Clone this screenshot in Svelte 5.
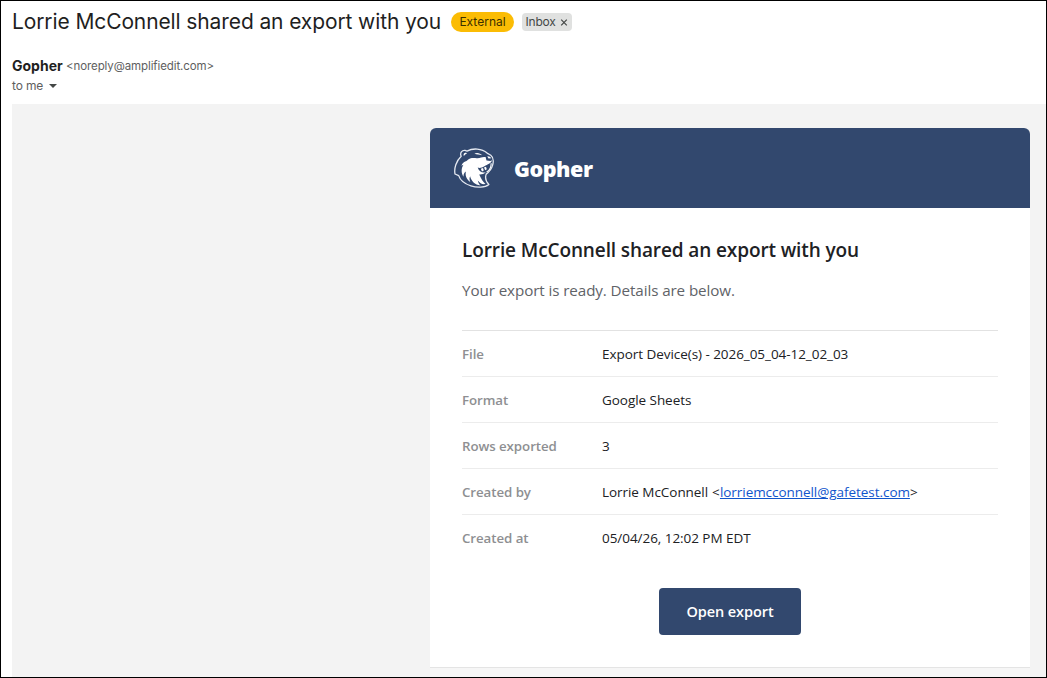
<script>
  const details = [
    { label: 'File', value: 'Export Device(s) - 2026_05_04-12_02_03' },
    { label: 'Format', value: 'Google Sheets' },
    { label: 'Rows exported', value: '3' },
    { label: 'Created by', value: 'Lorrie McConnell', email: 'lorriemcconnell@gafetest.com' },
    { label: 'Created at', value: '05/04/26, 12:02 PM EDT' }
  ];
</script>

<main class="window">
  <header class="mail-head">
    <div class="subject-row">
      <h1>Lorrie McConnell shared an export with you</h1>
      <span class="external">External</span>
      <span class="inbox"><span>Inbox</span>
        <svg width="8" height="8" viewBox="0 0 8 8"><path d="M1.2 1.7l5.6 5.6M6.8 1.7L1.2 7.3" stroke="#444746" stroke-width="1.2" /></svg>
      </span>
    </div>
    <div class="sender"><strong>Gopher</strong><span>&lt;noreply@amplifiedit.com&gt;</span></div>
    <div class="recipient"><span>to me</span>
      <svg width="8" height="4" viewBox="0 0 8 4"><path d="M0 0h8L4 4z" fill="#444746" /></svg>
    </div>
  </header>

  <section class="mail-body">
    <article class="card">
      <div class="brand">
        <svg class="logo" viewBox="0 0 40 40" width="40" height="40" fill="none">
          <path d="M7.2 8.2C5.6 5.1 8 2 11.1 2.4L13 3.1C18.8-.1 27.8.2 33.1 5.1L36.8 7.3C39.7 9.6 39.8 13.1 38.6 17.2C37.8 20.4 35.4 23.8 32.2 26.1C31 29.6 31.7 33.4 34.9 36.4C30.9 39.8 22.7 39.8 16.9 37.8C11.2 36 6.4 33 4.7 27.6L1 26C-.1 20.5 2.2 12.8 7.2 8.2Z" stroke="#e4e8f0" stroke-width="1.3" stroke-linejoin="round" />
          <path d="M9.6 6.2C10.4 4.5 12.5 4.5 13.3 5.3C11.7 6 10.8 6.9 9.8 8.3Z" fill="#fff" />
          <path d="M20.4 5.8C23 4.2 26.4 5.5 28 7.3C25.4 6.5 23.1 6.4 20.4 5.8Z" fill="#fff" />
          <path d="M12.5 13C16.3 9 20.2 10.4 23.4 10.2C27.2 10 28.2 8.4 31.6 9.1L32.5 12.4L36.4 13L38.2 12.3C37 15.5 33.6 16.4 30.4 18.3C27.5 20.1 25.2 20.2 23.7 19.5C25.1 23.5 28 25.1 31.9 24.2C29.7 25.9 27.7 26.6 25.2 26.4C27.2 30.8 29.1 33.8 31.5 36.1C28.1 36.8 26.1 35.1 23.8 32.5C24.2 34.7 25.1 36.1 26.5 37.4C20.8 36.9 17.2 32.8 16.1 28.2C15.2 30.1 15.4 31.8 16.3 34C12.4 31.2 11 27.6 11.9 23.5C10 24.6 9.5 26.4 9.5 28.7C7 24.7 7.2 20.3 9.4 16.7L7.4 17.7C8.3 15.4 9.8 13.7 12.5 13Z" fill="#fff" />
          <path d="M37.2 15.2C37.2 18.4 35.5 22.4 32.6 24" stroke="#fff" stroke-width="1.1" />
          <path d="M30 19.6l2-.9.8 2.6-1.6 1zM26.8 20.8l2.2-.7.8 2.5-1.8.8z" fill="#fff" />
          <path d="M33.3 8.3C34.6 7.9 36.4 8.7 37.3 10.3L34.5 10.6Z" fill="#fff" />
        </svg>
        <span>Gopher</span>
      </div>
      <div class="content">
        <h2>Lorrie McConnell shared an export with you</h2>
        <p>Your export is ready. Details are below.</p>
        <dl>
          {#each details as item}
            <div class="row">
              <dt>{item.label}</dt>
              <dd>{item.value}{#if item.email}<span class="angle">{' <'}</span><a href={'mailto:' + item.email}>{item.email}</a>&gt;{/if}</dd>
            </div>
          {/each}
        </dl>
        <button>Open export</button>
      </div>
      <footer></footer>
    </article>
  </section>
</main>

<style>
  .window {
    box-sizing: border-box;
    width: 1047px;
    height: 678px;
    border: 1px solid #000;
    background: #fff;
    overflow: hidden;
    color: #202124;
    font-family: Inter, sans-serif;
    display: flex;
    flex-direction: column;
  }
  .mail-head { height: 103px; flex: none; padding-left: 11px; }
  .subject-row { display: flex; align-items: center; height: 42px; }
  h1 { margin: 0; padding-bottom: 2px; width: 429px; font-size: 21px; font-weight: 400; letter-spacing: -0.11px; white-space: nowrap; color: #1f1f1f; }
  .external { box-sizing: border-box; width: 63px; height: 20px; margin-left: 10px; border-radius: 10px; background: #fbbc04; text-align: center; font-size: 12px; line-height: 20px; color: #3c3000; }
  .inbox { box-sizing: border-box; display: flex; align-items: center; justify-content: space-between; width: 50px; height: 18px; margin-left: 8px; padding: 0 4px 0 3.5px; border-radius: 4px; background: #e0e1e0; font-size: 12px; line-height: 16px; letter-spacing: -0.2px; color: #444746; }
  .inbox span { padding-bottom: 1px; }
  .sender { display: flex; align-items: center; height: 20px; margin-top: 13px; line-height: 20px; white-space: nowrap; }
  .sender strong { width: 54px; font-size: 14px; font-weight: 700; color: #1f1f1f; }
  .sender span { font-size: 11.5px; padding-bottom: 1px; letter-spacing: -0.1px; color: #5e5e5e; }
  .recipient { display: flex; align-items: center; gap: 6px; height: 20px; font-size: 12px; letter-spacing: -0.15px; color: #5e5e5e; }
  .recipient span { padding-bottom: 2px; }
  .mail-body { flex: 1; min-height: 0; margin-left: 11px; padding: 24px 16px 0 0; display: flex; justify-content: flex-end; background: #f3f3f3; }
  .card { width: 600px; height: 620px; border-radius: 6px 6px 0 0; overflow: hidden; background: #fff; font-family: "Open Sans", sans-serif; }
  .brand { display: flex; align-items: center; gap: 20px; height: 80px; padding-left: 24px; background: #32486e; color: #fff; font-size: 21.5px; font-weight: 800; letter-spacing: -0.45px; }
  .brand span { line-height: 30px; padding-top: 2px; }
  .content { box-sizing: border-box; height: 459px; padding: 28px 32px 0; }
  h2 { margin: 0; font-size: 19px; font-weight: 600; line-height: 28px; letter-spacing: -0.11px; white-space: nowrap; }
  p { margin: 14px 0 0; font-size: 15.2px; line-height: 24px; letter-spacing: -0.09px; color: #5f6368; }
  dl { margin: 28px 0 0; border-top: 1px solid #e2e2e2; }
  .row { box-sizing: border-box; display: flex; align-items: center; height: 46px; padding-top: 1px; border-bottom: 1px solid #ececec; }
  .row:last-child { border-bottom-color: transparent; }
  dt { width: 140px; font-size: 13.3px; font-weight: 600; letter-spacing: -0.07px; color: #8e8f92; }
  dd { margin: 0; font-size: 13.5px; letter-spacing: -0.05px; white-space: nowrap; }
  .angle { letter-spacing: 0.3px; }
  a { color: #1155cc; text-decoration: underline; }
  button { display: block; width: 142px; height: 47px; margin: 27px auto 0; padding: 0; border: 0; border-radius: 4px; background: #32486e; color: #fff; font: 600 14.5px "Open Sans", sans-serif; letter-spacing: -0.08px; }
  footer { height: 40px; border-top: 1px solid #e4e4e4; background: #f6f6f6; }
</style>
